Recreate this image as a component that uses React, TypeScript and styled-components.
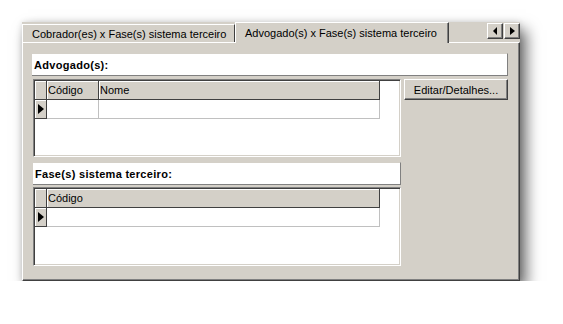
import React, { FC } from "react";
import styled, { createGlobalStyle } from "styled-components";

const face = "#d4d0c8";
const shadow = "#808080";
const dark = "#404040";

const GlobalStyle = createGlobalStyle`
  html, body {
    margin: 0;
    padding: 0;
    background: #fff;
  }
  body {
    font-family: "Liberation Sans", Arial, sans-serif;
    font-size: 11px;
    color: #000;
  }
`;

const Window = styled.div`
  display: flex;
  flex-direction: column;
  margin: 22px 0 0 22px;
  width: 498px;
  height: 259px;
  background: ${face};
  box-shadow: 6px 8px 14px rgba(0, 0, 0, 0.6), 0 0 6px rgba(0, 0, 0, 0.12);
`;

const TabStrip = styled.div`
  display: flex;
  align-items: flex-end;
  height: 20px;
`;

const Tab = styled.div<{ $active?: boolean }>`
  position: relative;
  z-index: ${(p) => (p.$active ? 1 : 0)};
  box-sizing: border-box;
  display: flex;
  align-items: center;
  width: ${(p) => (p.$active ? 214 : 213)}px;
  height: ${(p) => (p.$active ? 21 : 18)}px;
  margin-bottom: ${(p) => (p.$active ? -1 : 0)}px;
  padding-left: 9px;
  padding-top: ${(p) => (p.$active ? 0 : 1)}px;
  background: ${face};
  border-top: 1px solid #fff;
  border-left: 1px solid #fff;
  border-right: 1px solid ${dark};
  box-shadow: ${(p) => (p.$active ? `inset -1px 0 ${shadow}` : "none")};
  white-space: nowrap;
`;

const Arrows = styled.div`
  display: flex;
  align-self: flex-start;
  gap: 1px;
  margin: 1px 0 0 auto;
`;

const ArrowBtn = styled.div`
  box-sizing: border-box;
  display: flex;
  align-items: center;
  justify-content: center;
  width: 16px;
  height: 16px;
  background: ${face};
  border-top: 1px solid #fff;
  border-left: 1px solid #fff;
  border-right: 1px solid ${dark};
  border-bottom: 1px solid ${dark};
  box-shadow: inset -1px -1px ${shadow};
`;

const Triangle = styled.span<{ $dir: "left" | "right"; $h?: number }>`
  width: 0;
  height: 0;
  border-top: ${(p) => p.$h ?? 4}px solid transparent;
  border-bottom: ${(p) => p.$h ?? 4}px solid transparent;
  ${(p) =>
    p.$dir === "left"
      ? `border-right: ${p.$h ?? 4}px solid #000;`
      : `border-left: ${(p.$h ?? 4) + 1}px solid #000;`}
`;

const Panel = styled.div`
  flex: 1;
  display: flex;
  flex-direction: column;
  padding: 10px 11px 0 9px;
  border-top: 1px solid #fff;
  border-left: 1px solid #fff;
  border-right: 1px solid ${dark};
  border-bottom: 1px solid ${dark};
  box-shadow: inset -1px -1px ${shadow};
`;

const Caption = styled.div<{ $w?: number }>`
  box-sizing: border-box;
  display: flex;
  align-items: center;
  width: ${(p) => (p.$w ? `${p.$w}px` : "auto")};
  height: 23px;
  padding-left: 2px;
  background: #fff;
  border-right: 1px solid ${shadow};
  border-bottom: 1px solid ${shadow};
  border-top: 1px solid ${face};
  font-weight: bold;
  font-size: 11px;
  letter-spacing: 0.3px;
`;

const Body = styled.div`
  display: flex;
  gap: 3px;
  margin-top: 3px;
`;

const LeftCol = styled.div`
  display: flex;
  flex-direction: column;
  width: 368px;
  margin-left: 1px;
`;

const RightCol = styled.div`
  display: flex;
  flex-direction: column;
  width: 104px;
`;

const Grid = styled.div<{ $h: number; $mb?: number }>`
  box-sizing: border-box;
  height: ${(p) => p.$h}px;
  margin-bottom: ${(p) => p.$mb ?? 0}px;
  background: #fff;
  border-top: 1px solid ${shadow};
  border-left: 1px solid ${shadow};
  border-right: 1px solid #fff;
  border-bottom: 1px solid #fff;
  box-shadow: inset 1px 1px ${dark}, inset -1px -1px ${face};
  padding: 1px 0 0 1px;
`;

const Row = styled.div`
  display: flex;
  height: 19px;
`;

const HeadCell = styled.div<{ $w: number }>`
  box-sizing: border-box;
  display: flex;
  align-items: center;
  width: ${(p) => p.$w}px;
  padding-left: 1px;
  background: ${face};
  border-right: 1px solid ${dark};
  border-bottom: 1px solid ${dark};
  box-shadow: inset 1px 1px #fff;
  white-space: nowrap;
`;

const Indicator = styled(HeadCell)`
  justify-content: center;
  padding-left: 0;
`;

const Cell = styled.div<{ $w: number }>`
  box-sizing: border-box;
  width: ${(p) => p.$w}px;
  border-right: 1px solid #c0c0c0;
  border-bottom: 1px solid #c0c0c0;
`;

const Spacer = styled.div<{ $h: number }>`
  height: ${(p) => p.$h}px;
`;

const Button = styled.div`
  box-sizing: border-box;
  display: flex;
  align-items: center;
  justify-content: center;
  height: 21px;
  background: ${face};
  border-top: 1px solid #fff;
  border-left: 1px solid #fff;
  border-right: 1px solid ${dark};
  border-bottom: 1px solid ${dark};
  box-shadow: inset -1px -1px ${shadow};
  white-space: nowrap;
`;

interface Column {
  label: string;
  width: number;
}

const DataGrid: FC<{ columns: Column[]; height: number; mb?: number }> = ({
  columns,
  height,
  mb,
}) => (
  <Grid $h={height} $mb={mb}>
    <Row>
      <HeadCell $w={12} />
      {columns.map((c) => (
        <HeadCell key={c.label} $w={c.width}>
          {c.label}
        </HeadCell>
      ))}
    </Row>
    <Row>
      <Indicator $w={12}>
        <Triangle $dir="right" $h={5} />
      </Indicator>
      {columns.map((c) => (
        <Cell key={c.label} $w={c.width} />
      ))}
    </Row>
  </Grid>
);

const App: FC = () => (
  <>
    <GlobalStyle />
    <Window>
      <TabStrip>
        <Tab>Cobrador(es) x Fase(s) sistema terceiro</Tab>
        <Tab $active>Advogado(s) x Fase(s) sistema terceiro</Tab>
        <Arrows>
          <ArrowBtn>
            <Triangle $dir="left" />
          </ArrowBtn>
          <ArrowBtn>
            <Triangle $dir="right" />
          </ArrowBtn>
        </Arrows>
      </TabStrip>
      <Panel>
        <Caption>Advogado(s):</Caption>
        <Body>
          <LeftCol>
            <DataGrid
              height={78}
              mb={5}
              columns={[
                { label: "Código", width: 52 },
                { label: "Nome", width: 281 },
              ]}
            />
            <Caption $w={368}>Fase(s) sistema terceiro:</Caption>
            <Spacer $h={2} />
            <DataGrid height={79} columns={[{ label: "Código", width: 333 }]} />
          </LeftCol>
          <RightCol>
            <Button>Editar/Detalhes...</Button>
          </RightCol>
        </Body>
      </Panel>
    </Window>
  </>
);

export default App;
